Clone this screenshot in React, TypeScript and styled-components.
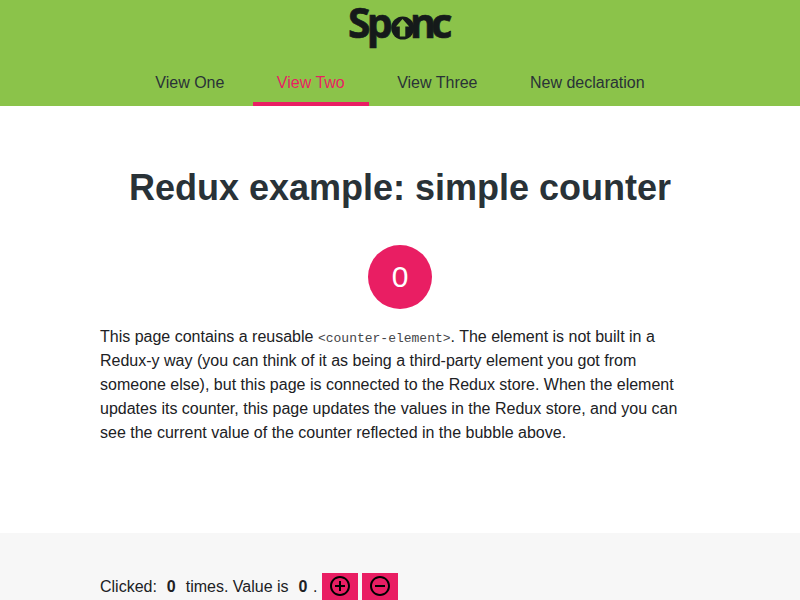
import React from "react";
import styled, { createGlobalStyle } from "styled-components";

const GlobalStyle = createGlobalStyle`
  html, body { margin: 0; padding: 0; background: #fff; }
  body { font-family: "Liberation Sans", Arial, sans-serif; font-size: 16px; color: #202124; }
`;

const Page = styled.div`
  height: 100vh;
  overflow: hidden;
  display: flex;
  flex-direction: column;
`;

const Header = styled.header`
  flex: none;
  height: 106px;
  background: #8bc34a;
  display: flex;
  flex-direction: column;
  align-items: center;
  justify-content: space-between;
`;

const Logo = styled.svg`
  display: block;
  width: 120px;
  height: 54px;
  overflow: visible;

  text {
    font-family: "Open Sans", sans-serif;
    font-weight: 700;
    font-size: 41px;
    stroke: #151a1a;
    stroke-width: 0.7px;
  }
`;

const Nav = styled.nav`
  line-height: 30px;
  display: flex;
  gap: 4.45px;
`;

const NavLink = styled.a<{ $active?: boolean }>`
  display: block;
  padding: 4px 24px;
  text-decoration: none;
  color: ${(p) => (p.$active ? "#e91e63" : "#293237")};
  border-bottom: 4px solid ${(p) => (p.$active ? "#e91e63" : "transparent")};
`;

const Section = styled.section<{ $shaded?: boolean }>`
  flex: none;
  box-sizing: border-box;
  height: ${(p) => (p.$shaded ? "160px" : "427px")};
  padding: ${(p) => (p.$shaded ? "40px" : "61px")} 100px 0;
  background: ${(p) => (p.$shaded ? "#f7f7f7" : "#fff")};
`;

const Title = styled.h1`
  margin: 0 -20px;
  font-size: 36px;
  line-height: 42px;
  text-align: center;
  white-space: nowrap;
  color: #293237;
`;

const Bubble = styled.div`
  width: 64px;
  height: 64px;
  margin: 36px auto 16px;
  border-radius: 50%;
  background: #e91e63;
  color: #fff;
  font-size: 30px;
  line-height: 63px;
  text-align: center;
`;

const Paragraph = styled.p`
  margin: 0;
  line-height: 24px;

  code {
    font-family: "Liberation Mono", monospace;
    font-size: 13px;
    line-height: 1;
    color: #45464a;
  }
`;

const Counter = styled.div`
  display: flex;
  gap: 4px;
`;

const Status = styled.span`
  line-height: 27px;
  white-space: pre;
  margin-right: 1px;

  b { margin: 0 5.5px; }
`;

const IconButton = styled.button`
  flex: none;
  width: 36px;
  height: 34px;
  padding: 1px 6px;
  border: 0;
  background: #e91e63;

  svg { display: block; width: 24px; height: 24px; margin-bottom: 8px; }
`;

const links = ["View One", "View Two", "View Three", "New declaration"];

export default function App() {
  return (
    <Page>
      <GlobalStyle />
      <Header>
        <Logo viewBox="0 0 120 54" fill="#151a1a" aria-label="Sponc">
          <text x="8" y="38.2" textLength="22.5" lengthAdjust="spacingAndGlyphs">S</text>
          <text x="26.8" y="38.2" textLength="26" lengthAdjust="spacingAndGlyphs">p</text>
          <circle cx="62.7" cy="28" r="11.5" />
          <path d="M62.5 19 L69.2 26.5 H65.3 V36.5 H59.8 V26.5 H56 Z" fill="#8bc34a" />
          <text x="70" y="38.2" textLength="26" lengthAdjust="spacingAndGlyphs">n</text>
          <text x="91" y="38.2" textLength="21.5" lengthAdjust="spacingAndGlyphs">c</text>
        </Logo>
        <Nav>
          {links.map((label) => (
            <NavLink key={label} $active={label === "View Two"}>{label}</NavLink>
          ))}
        </Nav>
      </Header>
      <Section>
        <Title>Redux example: simple counter</Title>
        <Bubble>0</Bubble>
        <Paragraph>
          This page contains a reusable <code>&lt;counter-element&gt;</code>. The element is not
          built in a Redux-y way (you can think of it as being a third-party element you got from
          someone else), but this page is connected to the Redux store. When the element updates
          its counter, this page updates the values in the Redux store, and you can see the
          current value of the counter reflected in the bubble above.
        </Paragraph>
      </Section>
      <Section $shaded>
        <Counter>
          <Status>Clicked: <b>0</b> times. Value is <b>0</b>.</Status>
          <IconButton title="Add">
            <svg viewBox="0 0 24 24"><path d="M13 7h-2v4H7v2h4v4h2v-4h4v-2h-4V7zm-1-5C6.48 2 2 6.48 2 12s4.48 10 10 10 10-4.48 10-10S17.52 2 12 2zm0 18c-4.41 0-8-3.59-8-8s3.59-8 8-8 8 3.59 8 8-3.59 8-8 8z" /></svg>
          </IconButton>
          <IconButton title="Remove">
            <svg viewBox="0 0 24 24"><path d="M7 11v2h10v-2H7zm5-9C6.48 2 2 6.48 2 12s4.48 10 10 10 10-4.48 10-10S17.52 2 12 2zm0 18c-4.41 0-8-3.59-8-8s3.59-8 8-8 8 3.59 8 8-3.59 8-8 8z" /></svg>
          </IconButton>
        </Counter>
      </Section>
    </Page>
  );
}
